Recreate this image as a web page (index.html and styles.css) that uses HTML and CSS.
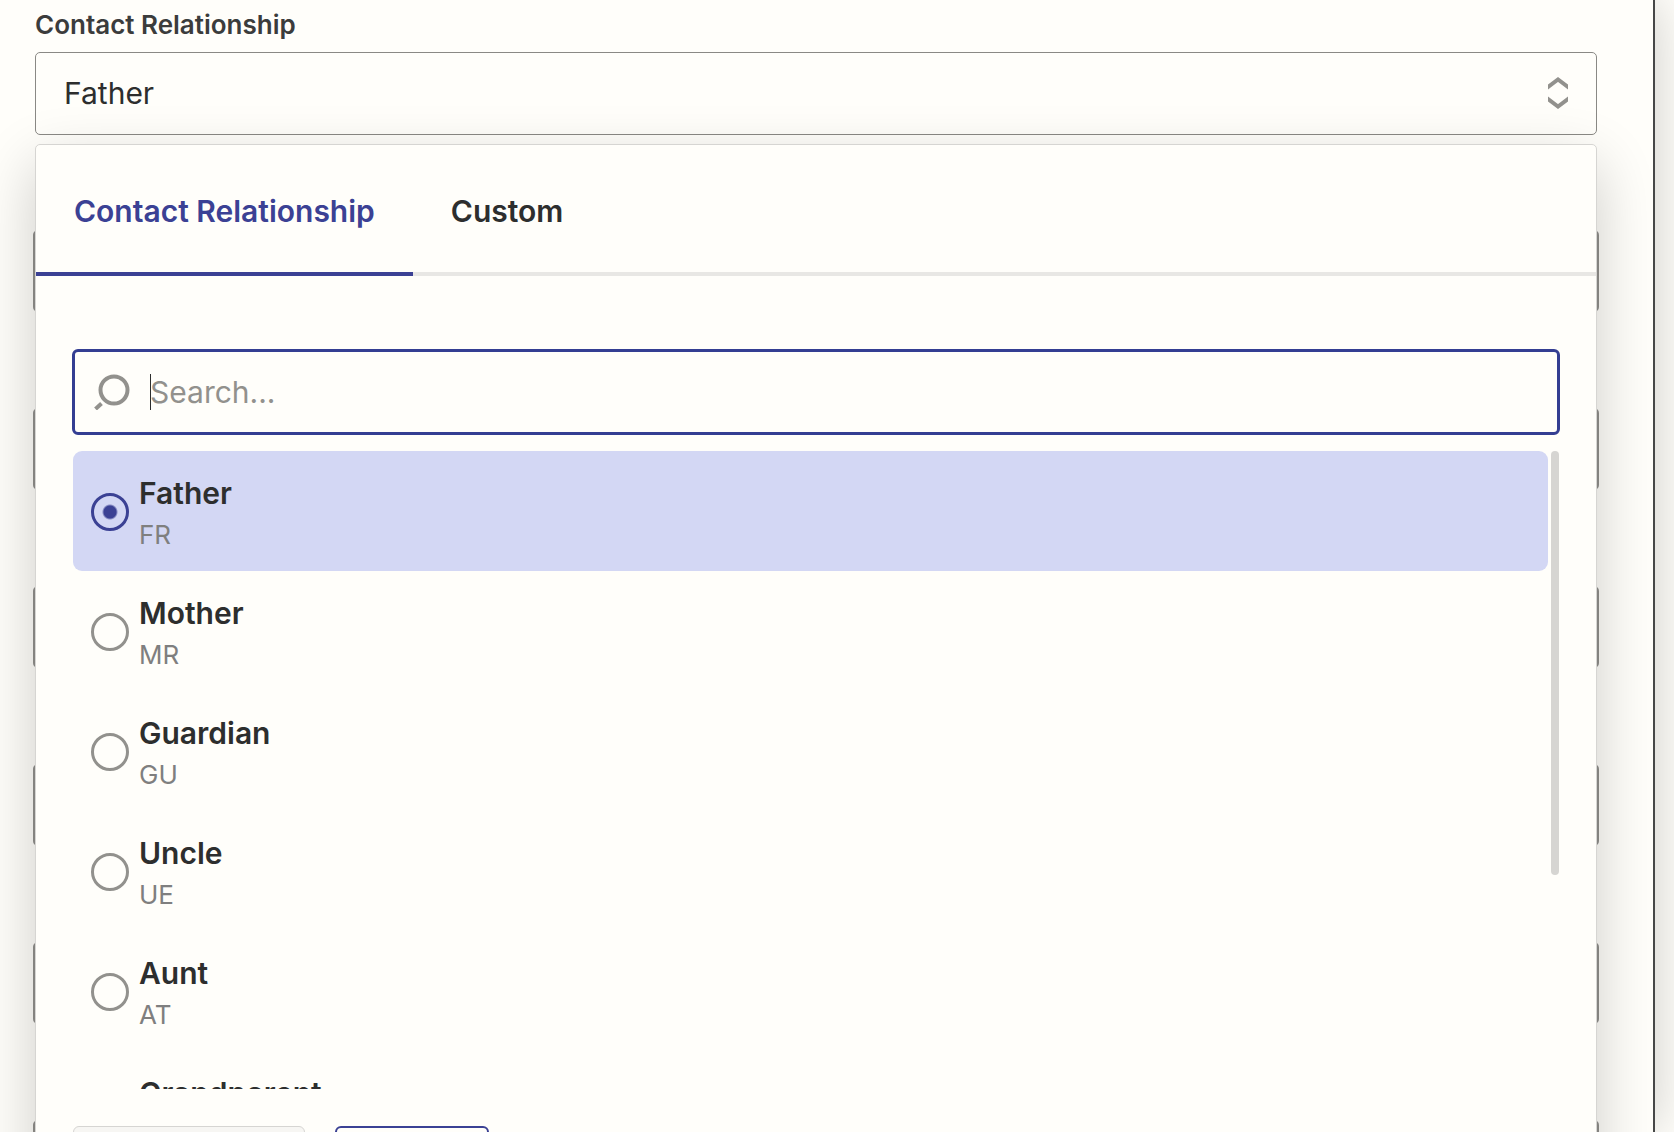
FILE: index.html
```html
<!DOCTYPE html>
<html lang="en">
<head>
    <meta charset="UTF-8">
    <title>Contact Relationship</title>
    <link rel="stylesheet" href="styles.css">
</head>
<body>

<main class="panel">
    <div class="field">
        <label class="field-label" for="relationship">Contact Relationship</label>
        <div class="select-box">
            <select id="relationship" name="relationship">
                <option>Father</option>
            </select>
            <svg class="chevrons" viewBox="0 0 20 32" aria-hidden="true">
                <path d="M-2 11.5 L10 2.5 L22 11.5 M-2 20.5 L10 29.5 L22 20.5"/>
            </svg>
        </div>

        <!-- open dropdown -->
        <div class="dropdown">
            <div class="tabs" role="tablist">
                <button class="tab active" type="button" role="tab" aria-selected="true">Contact Relationship</button>
                <button class="tab" type="button" role="tab" aria-selected="false">Custom</button>
            </div>

            <div class="dropdown-body">
                <div class="search">
                    <svg class="search-icon" viewBox="0 0 36 36" aria-hidden="true">
                        <circle cx="20" cy="16" r="13.5"/>
                        <path d="M1.5 35 L7.5 29.5"/>
                    </svg>
                    <span class="caret"></span>
                    <input type="text" placeholder="Search..." aria-label="Search">
                </div>

                <div class="list-wrap">
                    <div class="list">
                        <label class="option selected">
                            <input type="radio" name="option" checked>
                            <span class="option-text"><span class="name">Father</span><span class="code">FR</span></span>
                        </label>
                        <label class="option">
                            <input type="radio" name="option">
                            <span class="option-text"><span class="name">Mother</span><span class="code">MR</span></span>
                        </label>
                        <label class="option">
                            <input type="radio" name="option">
                            <span class="option-text"><span class="name">Guardian</span><span class="code">GU</span></span>
                        </label>
                        <label class="option">
                            <input type="radio" name="option">
                            <span class="option-text"><span class="name">Uncle</span><span class="code">UE</span></span>
                        </label>
                        <label class="option">
                            <input type="radio" name="option">
                            <span class="option-text"><span class="name">Aunt</span><span class="code">AT</span></span>
                        </label>
                        <label class="option">
                            <input type="radio" name="option">
                            <span class="option-text"><span class="name">Grandparent</span><span class="code"></span></span>
                        </label>
                    </div>
                    <div class="scrollbar"></div>
                </div>

                <div class="actions">
                    <button class="btn btn-clear" type="button" aria-label="Clear"></button>
                    <button class="btn btn-load" type="button" aria-label="Load"></button>
                </div>
            </div>
        </div>
    </div>

    <!-- rest of the form, under the dropdown -->
    <div class="form-rows">
        <input type="text" aria-label="Field 1">
        <input type="text" aria-label="Field 2">
        <input type="text" aria-label="Field 3">
        <input type="text" aria-label="Field 4">
        <input type="text" aria-label="Field 5">
        <input type="text" aria-label="Field 6">
    </div>
</main>

</body>
</html>
```

FILE: styles.css
```css
* {
    box-sizing: border-box;
}
html {
    overflow: hidden;
}
body {
    margin: 0;
    font-family: Inter, "Liberation Sans", sans-serif;
    color: #2d2e2e;
    background-color: #fffefa;
}
input, select, button {
    font-family: inherit;
    color: inherit;
}
.panel {
    height: 100vh;
    margin-right: 19px;
    padding: 8px 54px 0 33px;
    overflow: hidden;
    border-right: 2px solid #464747;
    background-color: #fffefa;
    box-shadow: 0 0 50px rgba(0, 0, 0, 0.2);
}
.field {
    position: relative;
    margin: 0 2px;
}
.field-label {
    display: block;
    margin-bottom: 10px;
    font-size: 26px;
    font-weight: 600;
    line-height: 34px;
    color: #3b3c3c;
}
.select-box {
    display: flex;
    align-items: center;
    height: 83px;
    padding: 0 28px 2px;
    border: 1px solid #8a8985;
    border-radius: 5px;
}
.select-box select {
    flex: 1;
    padding: 0;
    border: none;
    appearance: none;
    background: none;
    font-size: 30px;
}
.chevrons {
    width: 20px;
    height: 32px;
    fill: none;
    stroke: #92918d;
    stroke-width: 4;
}
.dropdown {
    position: absolute;
    z-index: 1;
    top: 100%;
    left: 0;
    right: 0;
    margin-top: 9px;
    padding-bottom: 38px;
    border: 1px solid #d6d5d2;
    border-radius: 5px;
    background-color: #fffefa;
    box-shadow: 0 20px 60px rgba(0, 0, 0, 0.2);
}
.tabs {
    display: flex;
    background: linear-gradient(#e8e7e4, #e8e7e4) bottom / 100% 4px no-repeat;
}
.tab {
    height: 131px;
    padding: 4px 38px 0;
    border: none;
    border-bottom: 4px solid transparent;
    background: none;
    font-size: 30px;
    font-weight: 600;
}
.tab.active {
    border-bottom-color: #3b4194;
    color: #3b4194;
}
.dropdown-body {
    padding: 73px 36px 0;
}
.search {
    display: flex;
    align-items: center;
    height: 86px;
    padding: 0 19px;
    border: 3px solid #343e92;
    border-radius: 6px;
}
.search-icon {
    width: 36px;
    height: 36px;
    fill: none;
    stroke: #92918d;
    stroke-width: 4;
}
.caret {
    width: 1px;
    height: 36px;
    margin: 0 -1px 0 20px;
    background-color: #2d2e2e;
}
.search input {
    flex: 1;
    padding: 0;
    border: none;
    outline: none;
    background: none;
    font-size: 30px;
}
.search input::placeholder {
    color: #92918d;
}
.list-wrap {
    display: flex;
    gap: 3px;
    height: 638px;
    margin: 16px 1px 0;
}
.list {
    flex: 1;
    overflow: hidden;
}
.option {
    display: flex;
    align-items: center;
    gap: 10px;
    height: 120px;
    padding: 2px 18px 0;
    border-radius: 9px;
}
.option.selected {
    background-color: #d3d7f4;
}
.option input {
    width: 38px;
    height: 38px;
    margin: 0;
    appearance: none;
    border: 3px solid #92918d;
    border-radius: 50%;
}
.option input:checked {
    border-color: #3b4194;
    background: radial-gradient(circle, #3b4194 6px, transparent 8px);
}
.option-text {
    padding-top: 4px;
}
.name, .code {
    display: block;
    height: 42px;
    line-height: 42px;
}
.name {
    font-size: 30px;
    font-weight: 600;
}
.code {
    font-size: 26px;
    color: #7f7f7f;
}
.scrollbar {
    width: 8px;
    height: 424px;
    border-radius: 4px;
    background-color: #d6d5d2;
}
.actions {
    display: flex;
    gap: 30px;
    margin: 37px 1px 0;
}
.btn {
    height: 80px;
    border: 1px solid #d6d5d2;
    border-radius: 6px;
    background-color: #f7f6f3;
}
.btn-clear {
    width: 232px;
}
.btn-load {
    width: 154px;
    border: 2px solid #3b4194;
    background-color: #fffefa;
}
.form-rows {
    display: flex;
    flex-direction: column;
    gap: 96px;
    margin-top: 95px;
}
.form-rows input {
    height: 82px;
    flex-shrink: 0;
    border: 2px solid #92918d;
    border-radius: 5px;
    background: none;
}
```
